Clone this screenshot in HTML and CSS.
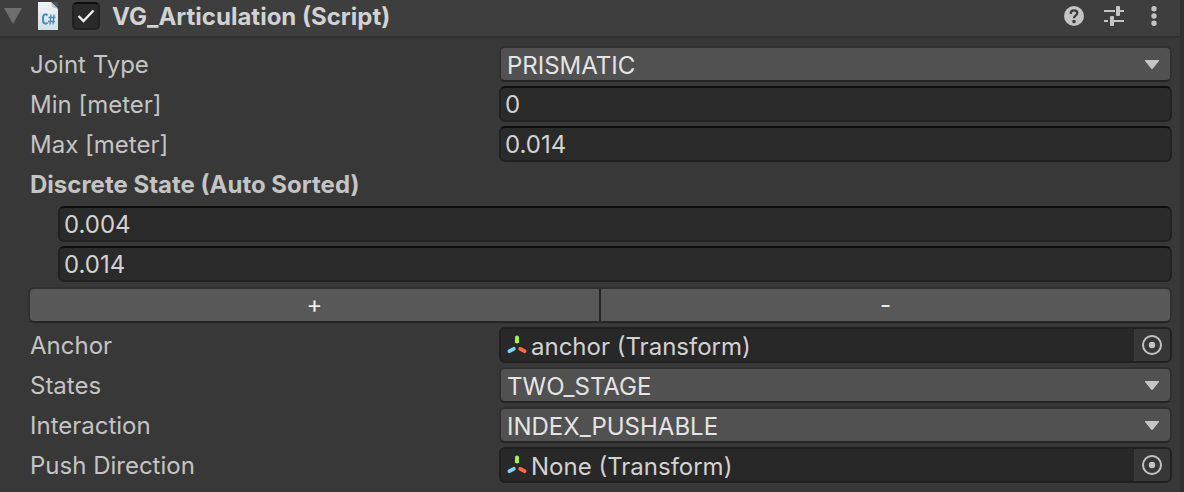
FILE: index.html
```html
<!DOCTYPE html>
<html lang="en">
<head>
<meta charset="utf-8">
<title>Inspector</title>
<link rel="stylesheet" href="styles.css">
</head>
<body>
<svg class="defs" aria-hidden="true">
  <symbol id="transform" viewBox="0 0 20 20">
    <path d="M10 3v5" stroke="#a6f04a" stroke-width="4"/>
    <path d="M10 2.500v4" stroke="#a6f04a" stroke-width="4" stroke-linecap="round"/>
    <path d="M2.500 16.200L6.700 13.800" stroke="#7ad4ff" stroke-width="3.800" stroke-linecap="round"/>
    <path d="M13.300 13.800L17.500 16.200" stroke="#ff6b3d" stroke-width="3.800" stroke-linecap="round"/>
  </symbol>
  <symbol id="target" viewBox="0 0 20 20">
    <circle cx="10" cy="10" r="9" fill="none" stroke="#c4c4c4" stroke-width="2"/>
    <circle cx="10" cy="10" r="3.200" fill="#c4c4c4"/>
  </symbol>
  <symbol id="arrow" viewBox="0 0 14 9"><path d="M0 0h14v1L7.500 9h-1L0 1z" fill="#c4c4c4"/></symbol>
</svg>
<main class="inspector">
  <header class="header">
    <button class="foldout" type="button" aria-label="Collapse component"><svg width="18" height="16" viewBox="0 0 18 16"><path d="M0 0h18L9 16z" fill="#6e6e6e"/></svg></button>
    <svg class="script-icon" width="22" height="30" viewBox="0 0 22 30" aria-hidden="true">
      <defs><linearGradient id="paper" x1="0" y1="0" x2="0" y2="1"><stop offset="0" stop-color="#f1f4f6"/><stop offset="1" stop-color="#d5dfe7"/></linearGradient></defs>
      <path d="M1 1h14l6 6v22H1z" fill="url(#paper)"/>
      <path d="M14 1l7 7V1z" fill="#4b555b"/><path d="M14 1l1 5 6 2z" fill="#b8c5cd"/>
      <path d="M10.500 14.500C9.500 12.800 6 12.500 6 17v2c0 4.500 3.500 4.200 4.500 2.500" fill="none" stroke="#3d93bd" stroke-width="2"/>
      <path d="M14 13.500l-1 10M17 13.500l-1 10M11.500 16.500h7M11 20.500h7" fill="none" stroke="#3d93bd" stroke-width="1.300"/>
    </svg>
    <span class="check">
      <input id="enabled" type="checkbox" checked>
      <svg class="check-mark" width="18" height="14" viewBox="0 0 18 14" aria-hidden="true"><path d="M1.500 7L6.500 12 16.500 1.500" fill="none" stroke="#eee" stroke-width="2.400"/></svg>
    </span>
    <label class="title" for="enabled">VG_Articulation (Script)</label>
    <div class="tools">
      <button type="button" aria-label="Help"><svg width="20" height="20" viewBox="0 0 20 20"><circle cx="10" cy="10" r="10" fill="#c4c4c4"/><path d="M6.800 8V7.200C6.800 3.400 13.300 3.400 13.300 7.200C13.300 9.500 10 9.400 10 12.300" fill="none" stroke="#3e3e3e" stroke-width="2.300"/><circle cx="10" cy="15.600" r="1.800" fill="#3e3e3e"/></svg></button>
      <button type="button" aria-label="Presets"><svg width="20" height="20" viewBox="0 0 20 20"><path d="M0 5h11M16 5h4M0 15h4M10 15h10" stroke="#c4c4c4" stroke-width="2"/><path d="M12 5h2M6 15h2" stroke="#c4c4c4" stroke-width="2"/><rect x="12" y="0" width="4" height="10" rx="1" fill="#c4c4c4"/><rect x="6" y="10" width="4" height="10" rx="1" fill="#c4c4c4"/></svg></button>
      <button type="button" aria-label="More options"><svg width="20" height="20" viewBox="0 0 20 20" fill="#c4c4c4"><circle cx="10" cy="2.700" r="2.700"/><circle cx="10" cy="10" r="2.700"/><circle cx="10" cy="17.300" r="2.700"/></svg></button>
    </div>
  </header>
  <form class="fields">
    <div class="row">
      <label for="joint">Joint Type</label>
      <div class="dropdown"><select id="joint"><option>PRISMATIC</option></select><svg class="arrow"><use href="#arrow"/></svg></div>
    </div>
    <div class="row"><label for="min">Min [meter]</label><input class="text" id="min" value="0"></div>
    <div class="row"><label for="max">Max [meter]</label><input class="text" id="max" value="0.014"></div>
    <h2 class="heading">Discrete State (Auto Sorted)</h2>
    <div class="states">
      <input class="text" aria-label="Discrete state 1" value="0.004">
      <input class="text" aria-label="Discrete state 2" value="0.014">
    </div>
    <div class="buttons"><button type="button">+</button><button type="button">-</button></div>
    <div class="row">
      <span class="name">Anchor</span>
      <div class="object"><svg class="object-icon"><use href="#transform"/></svg><span class="object-name">anchor (Transform)</span><button type="button" aria-label="Select anchor"><svg class="target"><use href="#target"/></svg></button></div>
    </div>
    <div class="row">
      <label for="states">States</label>
      <div class="dropdown"><select id="states"><option>TWO_STAGE</option></select><svg class="arrow"><use href="#arrow"/></svg></div>
    </div>
    <div class="row">
      <label for="interaction">Interaction</label>
      <div class="dropdown"><select id="interaction"><option>INDEX_PUSHABLE</option></select><svg class="arrow"><use href="#arrow"/></svg></div>
    </div>
    <div class="row">
      <span class="name">Push Direction</span>
      <div class="object"><svg class="object-icon"><use href="#transform"/></svg><span class="object-name">None (Transform)</span><button type="button" aria-label="Select push direction"><svg class="target"><use href="#target"/></svg></button></div>
    </div>
  </form>
</main>
</body>
</html>
```

FILE: styles.css
```css
* { box-sizing: border-box; }
body {
  margin: 0;
  background: #383838;
  color: #c4c4c4;
  font: 24px/36px Inter, "Liberation Sans", sans-serif;
}
button, input, select { font: inherit; color: inherit; margin: 0; }
button { padding: 0; border: 0; background: none; }
svg { display: block; flex: none; }
.defs { display: none; }

.inspector { min-height: 100vh; border-right: 4px solid #303030; }

.header {
  display: flex;
  align-items: center;
  height: 38px;
  padding: 0 16px 4px 4px;
  background: #3e3e3e;
  border-bottom: 2px solid #303030;
}
.script-icon { margin-left: 15px; }
.check { position: relative; margin: 0 12px 0 13px; }
.check input {
  display: block;
  width: 28px;
  height: 28px;
  appearance: none;
  background: #2a2a2a;
  border: 2px solid #212121;
  border-top-color: #0d0d0d;
  border-radius: 5px;
}
.check-mark { position: absolute; left: 5px; top: 7px; pointer-events: none; visibility: hidden; }
.check input:checked + .check-mark { visibility: visible; }
.title { padding-top: 2px; font-weight: 700; color: #d2d2d2; }
.tools { display: flex; gap: 20px; margin-left: auto; }

.fields { display: grid; gap: 4px; padding: 8px 8px 8px 30px; }
.row { display: grid; grid-template-columns: 469fr 673fr; height: 36px; }
.row label, .name { line-height: 38px; }
.heading { height: 36px; margin: 0; font-size: 24px; font-weight: 700; line-height: 38px; }

.text {
  width: 100%;
  min-width: 0;
  height: 36px;
  padding: 2px 4px 0;
  color: #d2d2d2;
  background: #2a2a2a;
  border: 2px solid #212121;
  border-top-color: #0d0d0d;
  border-radius: 6px;
}
.states { display: grid; gap: 4px; padding: 0 0 1px 28px; }

.dropdown { position: relative; }
.dropdown select {
  display: block;
  width: 100%;
  height: 36px;
  padding: 0 32px 4px 6px;
  appearance: none;
  color: #e4e4e4;
  background: #515151;
  border: 2px solid #303030;
  border-bottom-color: #242424;
  border-radius: 6px;
}
.arrow { position: absolute; right: 13px; top: 14px; width: 14px; height: 9px; pointer-events: none; }

.buttons {
  display: grid;
  grid-template-columns: 1fr 1fr;
  gap: 2px;
  height: 36px;
  margin-left: -2px;
  overflow: hidden;
  background: #242424;
  border: 2px solid #303030;
  border-bottom-color: #242424;
  border-radius: 6px;
}
.buttons button { background: #585858; color: #eee; font-size: 24px; line-height: 32px; }

.object {
  display: flex;
  align-items: center;
  height: 36px;
  padding-left: 6px;
  overflow: hidden;
  color: #d2d2d2;
  background: #282828;
  border: 2px solid #202020;
  border-radius: 6px;
}
.object-icon { width: 20px; height: 20px; }
.object-name { flex: 1; padding: 4px 0 0 4px; }
.object button { display: grid; place-items: center; width: 36px; height: 32px; background: #373737; }
.target { width: 20px; height: 20px; }
```
